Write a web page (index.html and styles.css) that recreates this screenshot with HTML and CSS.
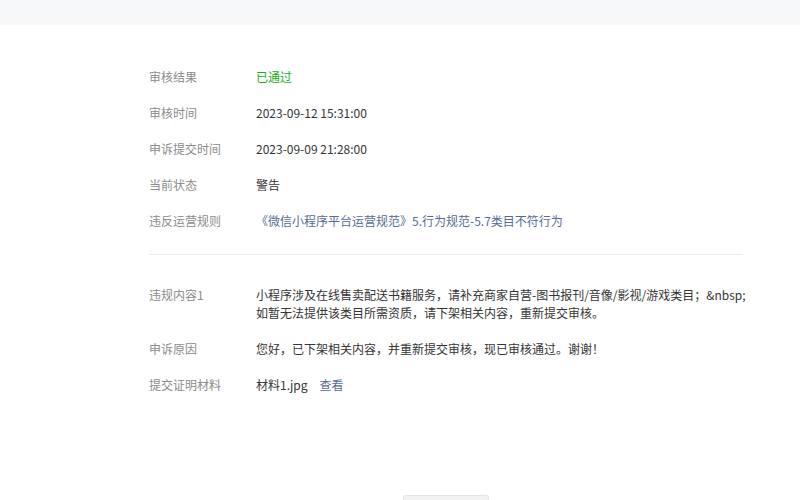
FILE: index.html
```html
<!DOCTYPE html>
<html lang="zh-CN">
<head>
    <meta charset="UTF-8">
    <meta name="viewport" content="width=device-width, initial-scale=1.0">
    <title>申诉详情</title>
    <link rel="stylesheet" href="styles.css">
</head>
<body>
    <header class="top-bar"></header>
    <main class="detail">
        <!-- 审核信息 -->
        <section class="detail-group">
            <div class="row">
                <div class="row-label">审核结果</div>
                <div class="row-value status-pass">已通过</div>
            </div>
            <div class="row">
                <div class="row-label">审核时间</div>
                <div class="row-value">2023-09-12 15:31:00</div>
            </div>
            <div class="row">
                <div class="row-label">申诉提交时间</div>
                <div class="row-value">2023-09-09 21:28:00</div>
            </div>
            <div class="row">
                <div class="row-label">当前状态</div>
                <div class="row-value">警告</div>
            </div>
            <div class="row">
                <div class="row-label">违反运营规则</div>
                <div class="row-value"><a class="link" href="#">《微信小程序平台运营规范》5.行为规范-5.7类目不符行为</a></div>
            </div>
        </section>
        <!-- 申诉内容 -->
        <section class="detail-group detail-group-bottom">
            <div class="row">
                <div class="row-label">违规内容1</div>
                <div class="row-value nowrap">小程序涉及在线售卖配送书籍服务，请补充商家自营-图书报刊/音像/影视/游戏类目；&amp;nbsp;<br>如暂无法提供该类目所需资质，请下架相关内容，重新提交审核。</div>
            </div>
            <div class="row">
                <div class="row-label">申诉原因</div>
                <div class="row-value">您好，已下架相关内容，并重新提交审核，现已审核通过。谢谢！</div>
            </div>
            <div class="row">
                <div class="row-label">提交证明材料</div>
                <div class="row-value">材料1.jpg<a class="link view-link" href="#">查看</a></div>
            </div>
        </section>
        <div class="actions">
            <button class="btn" aria-label="返回"></button>
        </div>
    </main>
</body>
</html>
```

FILE: styles.css
```css
body {
    margin: 0;
    padding: 0;
    font-family: "Noto Sans CJK SC", "Noto Sans", sans-serif;
    font-size: 12px;
    color: #353535;
    background-color: #fff;
    height: 500px;
    overflow: hidden;
}

.top-bar {
    height: 25px;
    background-color: #f6f8fa;
}

.detail {
    width: 594px;
    margin-left: 149px;
    padding-top: 43px;
}

.detail-group {
    padding-bottom: 6px;
    border-bottom: 1px solid #ececec;
}

.detail-group-bottom {
    border-bottom: none;
    padding-top: 31px;
}

.row {
    display: flex;
    line-height: 18px;
    margin-bottom: 18px;
}

.row-label {
    width: 107px;
    flex-shrink: 0;
    color: #8c8c8c;
}

.row-value {
    flex: 1;
}

.nowrap {
    white-space: nowrap;
}

.status-pass {
    color: #1aad19;
}

.link {
    color: #576b95;
    text-decoration: none;
}

.view-link {
    margin-left: 12px;
}

.actions {
    display: flex;
    justify-content: center;
    margin-top: 77px;
}

.btn {
    width: 86px;
    height: 30px;
    border: 1px solid #e4e4e4;
    border-radius: 3px;
    background-color: #f2f2f2;
    font-family: inherit;
    font-size: 12px;
}
```
